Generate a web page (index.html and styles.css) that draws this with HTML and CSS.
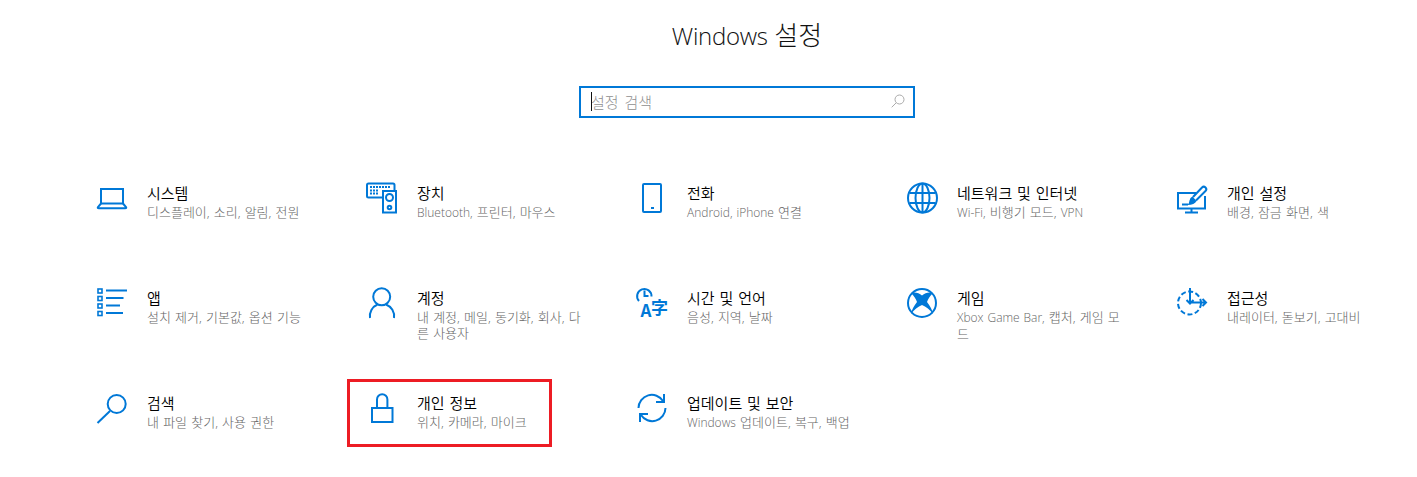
FILE: index.html
```html
<!DOCTYPE html>
<html lang="ko">
<head>
<meta charset="utf-8">
<title>Windows 설정</title>
<link rel="stylesheet" href="styles.css">
</head>
<body>
<main class="page">
  <header class="top">
    <h1 class="heading"><span class="latin">Windows</span> 설정</h1>
    <div class="search">
      <span class="caret"></span>
      <span class="placeholder">설정 검색</span>
      <svg class="search-icon" viewBox="0 0 14 14"><circle cx="8.5" cy="5.5" r="4.5"/><path d="M5.2 8.8 0.7 13.3"/></svg>
    </div>
  </header>
  <section class="grid">
    <div class="item">
      <svg class="icon" viewBox="0 0 32 32"><rect x="5" y="7" width="22" height="14.5"/><path d="M5 21.5 2 25q-.8 1.2.8 1.2h26.4q1.6 0 .8-1.2l-3-3.5"/></svg>
      <div class="text"><div class="name">시스템</div><div class="desc">디스플레이, 소리, 알림, 전원</div></div>
    </div>
    <div class="item">
      <svg class="icon" viewBox="0 0 32 32"><path d="M16 15.5H2.500q-1.500 0-1.500-1.500V3q0-1.500 1.500-1.500H27q1.500 0 1.500 1.500v5"/><rect x="17" y="9" width="13" height="21.500"/><circle cx="23.500" cy="15.500" r="3.500"/><circle cx="23.500" cy="25.500" r="1.800"/><path class="keys" d="M4 5h21M4 8.500h9M4 11.500h9"/></svg>
      <div class="text"><div class="name">장치</div><div class="desc"><span class="latin">Bluetooth,</span> 프린터, 마우스</div></div>
    </div>
    <div class="item">
      <svg class="icon" viewBox="0 0 32 32"><rect x="7" y="2" width="18" height="28" rx="1"/><rect class="solid" x="15" y="25" width="3" height="2"/></svg>
      <div class="text"><div class="name">전화</div><div class="desc"><span class="latin">Android, iPhone</span> 연결</div></div>
    </div>
    <div class="item">
      <svg class="icon" viewBox="0 0 32 32"><circle cx="16.500" cy="16" r="14.500"/><ellipse cx="16.500" cy="16" rx="7" ry="14.500"/><path d="M16.500 1.500v29M3.500 11h26M3.500 21h26"/></svg>
      <div class="text"><div class="name">네트워크 및 인터넷</div><div class="desc"><span class="latin">Wi-Fi,</span> 비행기 모드, <span class="latin">VPN</span></div></div>
    </div>
    <div class="item">
      <svg class="icon" viewBox="0 0 32 32"><path d="M20 11H2v15.500h27V14M15.500 26.500V30M9 30.500h13M6 22.500h6"/><path d="M17 15 26 5.500a2.400 2.400 0 0 1 3.500 3.500L20 18.500"/><path class="solid" d="M16.500 14.500l4 4.500q-2 4-9 4q2-2.500 2-4.500q.5-3 3-4z"/></svg>
      <div class="text"><div class="name">개인 설정</div><div class="desc">배경, 잠금 화면, 색</div></div>
    </div>
    <div class="item">
      <svg class="icon" viewBox="0 0 32 32"><rect class="bullet" x="2" y="2" width="4" height="4"/><rect class="bullet" x="2" y="9.500" width="4" height="4"/><rect class="bullet" x="2" y="17" width="4" height="4"/><rect class="bullet" x="2" y="24.500" width="4" height="4"/><path d="M10 3.500h21M10 11h17.500M10 18.500h14M10 26h17"/></svg>
      <div class="text"><div class="name">앱</div><div class="desc">설치 제거, 기본값, 옵션 기능</div></div>
    </div>
    <div class="item">
      <svg class="icon" viewBox="0 0 32 32"><circle cx="15.700" cy="9.700" r="8.500"/><path d="M4 31a12.500 12.500 0 0 1 7.500-13.500M20 17.500A12.500 12.500 0 0 1 28 31"/></svg>
      <div class="text"><div class="name">계정</div><div class="desc">내 계정, 메일, 동기화, 회사, 다른 사용자</div></div>
    </div>
    <div class="item">
      <svg class="icon" viewBox="0 0 32 32"><path d="M3 14A7.200 7.200 0 1 1 15.500 9.500"/><path d="M8.500 3.500v5.500h4"/><text class="glyph-a" x="4.500" y="30">A</text><text class="glyph-z" x="15" y="27">字</text></svg>
      <div class="text"><div class="name">시간 및 언어</div><div class="desc">음성, 지역, 날짜</div></div>
    </div>
    <div class="item">
      <svg class="icon" viewBox="0 0 32 32"><circle cx="16" cy="16" r="14"/><path class="solid" d="M5 6C9 4.500 13 6 16 8.500 19 6 23 4.500 27 6 24 9 22 12 21 15 24 19 26.500 23 27 27 24 23 20 19.500 16 18 12 19.500 8 23 5 27 5.500 23 8 19 11 15 10 12 8 9 5 6Z"/></svg>
      <div class="text"><div class="name">게임</div><div class="desc"><span class="latin">Xbox Game Bar,</span> 캡처, 게임 모드</div></div>
    </div>
    <div class="item">
      <svg class="icon" viewBox="0 0 32 32"><circle class="dashed" cx="13.500" cy="16" r="11.500"/><path d="M14 1v15.500M10.500 13l3.500 3.500 3.500-3.500M14 15.500h16M26.500 12l3.500 3.500-3.500 3.500"/></svg>
      <div class="text"><div class="name">접근성</div><div class="desc">내레이터, 돋보기, 고대비</div></div>
    </div>
    <div class="item">
      <svg class="icon" viewBox="0 0 32 32"><circle cx="20.700" cy="12" r="9"/><path d="M14 19 1.500 31"/></svg>
      <div class="text"><div class="name">검색</div><div class="desc">내 파일 찾기, 사용 권한</div></div>
    </div>
    <div class="item highlighted">
      <svg class="icon" viewBox="0 0 32 32"><rect x="6" y="16" width="20.500" height="14"/><path d="M11 16V7.500a5.200 5.200 0 0 1 10.400 0V16"/></svg>
      <div class="text"><div class="name">개인 정보</div><div class="desc">위치, 카메라, 마이크</div></div>
    </div>
    <div class="item">
      <svg class="icon" viewBox="0 0 32 32"><path d="M2.500 16A13.300 13.300 0 0 1 27 9M28 2v8h-8M29.500 16A13.300 13.300 0 0 1 5 23M4 30v-8h8"/></svg>
      <div class="text"><div class="name">업데이트 및 보안</div><div class="desc"><span class="latin">Windows</span> 업데이트, 복구, 백업</div></div>
    </div>
  </section>
</main>
</body>
</html>
```

FILE: styles.css
```css
* {
  box-sizing: border-box;
}

html,
body {
  margin: 0;
  height: 100%;
  background: #fff;
}

body {
  font-family: "Open Sans", "Noto Sans CJK KR", sans-serif;
  overflow: hidden;
}

.latin {
  font-size: 0.923em;
}

.page {
  display: flex;
  flex-direction: column;
}

.top {
  display: flex;
  flex-direction: column;
  align-items: center;
  padding: 18px 0 0 77px;
}

.heading {
  height: 36px;
  margin: 0;
  font-size: 26px;
  line-height: 34px;
  font-weight: 300;
  color: #111;
}

.heading .latin {
  letter-spacing: -0.3px;
}

.search {
  position: relative;
  display: flex;
  align-items: center;
  width: 336px;
  height: 32px;
  margin-top: 32px;
  padding: 0 8px 2px 10px;
  border: 2px solid #0078d7;
}

.caret {
  position: absolute;
  left: 10px;
  top: 4px;
  width: 1px;
  height: 19px;
  background: #111;
}

.placeholder {
  font-size: 15px;
  font-weight: 300;
  word-spacing: 2px;
  color: #8f8f8f;
}

.search-icon {
  width: 14px;
  height: 14px;
  margin-left: auto;
  fill: none;
  stroke: #aaa;
  stroke-width: 1;
}

.grid {
  display: grid;
  grid-template-columns: repeat(5, 270px);
  grid-auto-rows: 105px;
  margin-top: 64px;
  padding-left: 96px;
}

.item {
  position: relative;
  display: flex;
  gap: 19px;
}

.highlighted::after {
  content: "";
  box-sizing: border-box;
  position: absolute;
  left: -19px;
  top: -13px;
  width: 205px;
  height: 68px;
  border: 3px solid #ed1c24;
}

.icon {
  flex: none;
  width: 32px;
  height: 32px;
  overflow: visible;
  fill: none;
  stroke: #0078d7;
  stroke-width: 2;
}

.icon .solid {
  fill: #0078d7;
  stroke: none;
}

.icon .keys {
  stroke-width: 2;
  stroke-dasharray: 2 1;
}

.icon .bullet {
  stroke-width: 1.600;
}

.icon .dashed {
  stroke-dasharray: 5 2.500;
}

.glyph-a,
.glyph-z {
  fill: #0078d7;
  stroke: none;
  font-family: "Noto Sans CJK KR", sans-serif;
  font-weight: 700;
  font-size: 17px;
}

.text {
  width: 166px;
  padding-top: 1px;
  word-break: break-all;
}

.name {
  font-size: 15px;
  line-height: 20px;
  font-weight: 350;
  word-spacing: 1px;
  color: #000;
}

.desc {
  margin-top: 1px;
  font-size: 13px;
  line-height: 16px;
  font-weight: 300;
  word-spacing: 0.8px;
  color: #666;
}
```
